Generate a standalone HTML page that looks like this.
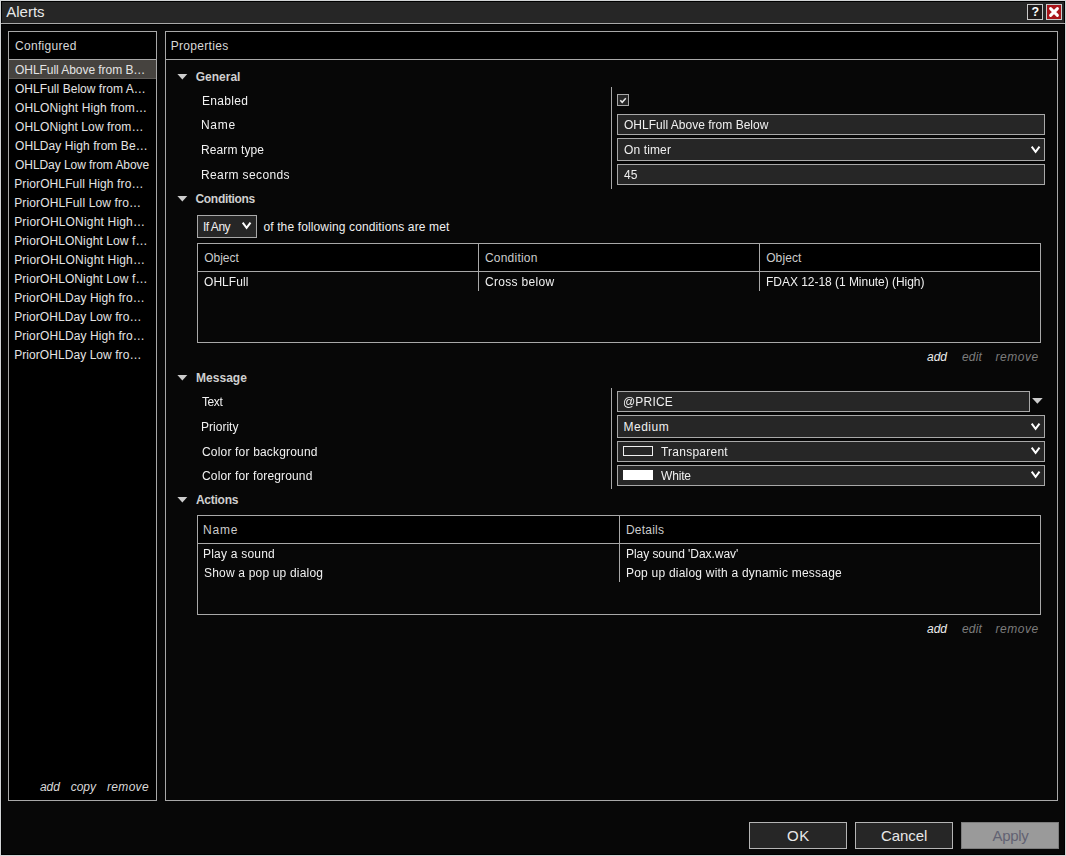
<!DOCTYPE html>
<html><head><meta charset="utf-8">
<style>
*{margin:0;padding:0;box-sizing:border-box}
html,body{width:1066px;height:856px;overflow:hidden;background:#070707}
body{position:relative;font-family:"Liberation Sans",sans-serif;font-size:12px;color:#f0f0f0}
.a{position:absolute}
.t{position:absolute;white-space:nowrap;line-height:12px;font-size:12px}
.b{font-weight:bold}
.it{font-style:italic}
.box{position:absolute;border:1px solid #a8a8a8}
.inp{position:absolute;border:1px solid #a8a8a8;background:#262626}
.hl{position:absolute;height:1px;background:#a8a8a8}
.vl{position:absolute;width:1px;background:#a8a8a8}
.tri{position:absolute;width:0;height:0;border-left:5px solid transparent;border-right:5px solid transparent;border-top:5px solid #b4b4b4}
.btn{position:absolute;border:1px solid #b4b4b4;background:#262626;height:27px;width:98px}
.li{color:#e4e4e4}
.lb{color:#f2f2f2}
.sh{color:#cfcfcf}
.hd{color:#cccccc}
.bt{font-size:15px;line-height:15px;color:#e8e8e8}
.g{will-change:transform}
</style></head><body>

<div class="a" style="left:0;top:0;width:1066px;height:856px;border:1px solid #d2d4d6"></div>
<div class="a" style="left:1px;top:1px;width:1064px;height:854px;border:1px solid #000"></div>
<div class="a" style="left:2px;top:2px;width:1062px;height:21px;background:#262626"></div>
<div class="a" style="left:1px;top:23px;width:1064px;height:1px;background:#a9a9a9"></div>
<div class="a" style="left:1px;top:24px;width:1064px;height:1px;background:#000"></div>
<div class="a" style="left:1027px;top:4px;width:16px;height:16px;border:1px solid #c8c8c8;background:#1e1a1a"></div>
<div class="t b" style="left:1031.6px;top:5.5px;font-size:12.5px;line-height:13px;color:#fff">?</div>
<div class="a" style="left:1046px;top:4px;width:16px;height:16px;border:1px solid #c8cccc;background:#a8151a"></div>
<svg class="a" style="left:1046px;top:4px" width="16" height="16"><path d="M4.6 4.6L11.4 11.4M11.4 4.6L4.6 11.4" stroke="#fff" stroke-width="3" stroke-linecap="round"/></svg>

<div class="box" style="left:8px;top:31px;width:149px;height:770px;background:#000"></div>
<div class="hl" style="left:9px;top:59px;width:147px"></div>
<div class="a" style="left:9px;top:60px;width:147px;height:18px;background:#46433f"></div>
<div class="a" style="left:9px;top:78px;width:147px;height:1px;background:#5e5b57"></div>

<div class="box" style="left:165px;top:31px;width:893px;height:770px;background:#070707"></div>
<div class="a" style="left:166px;top:32px;width:891px;height:27px;background:#000"></div>
<div class="hl" style="left:166px;top:59px;width:891px"></div>

<svg class="a" style="left:177px;top:74px" width="12" height="8"><path d="M0.4 0L10.3 0L5.35 5.6Z" fill="#cccccc"/></svg>
<div class="vl" style="left:611px;top:87px;height:102px"></div>
<div class="inp" style="left:617px;top:94px;width:12px;height:12px"></div>
<svg class="a" style="left:617px;top:94px" width="12" height="12"><path d="M3.3 6.2L5.2 8.3L8.8 4.3" fill="none" stroke="#e8e8e8" stroke-width="1.5"/></svg>
<div class="inp" style="left:617px;top:114px;width:428px;height:21px"></div>
<div class="inp" style="left:617px;top:138px;width:428px;height:23px"></div>
<svg class="a" style="left:1030px;top:146px" width="12" height="9"><path d="M1.7 0.7L5.6 5.9L9.5 0.7" fill="none" stroke="#fff" stroke-width="2"/></svg>
<div class="inp" style="left:617px;top:164px;width:428px;height:21px"></div>

<svg class="a" style="left:177px;top:196px" width="12" height="8"><path d="M0.4 0L10.3 0L5.35 5.6Z" fill="#cccccc"/></svg>
<div class="inp" style="left:197px;top:215px;width:60px;height:23px"></div>
<svg class="a" style="left:241px;top:222px" width="12" height="9"><path d="M1.7 0.7L5.6 5.9L9.5 0.7" fill="none" stroke="#fff" stroke-width="2"/></svg>
<div class="box" style="left:197px;top:243px;width:844px;height:100px;background:#070707"></div>
<div class="a" style="left:198px;top:244px;width:842px;height:27px;background:#000"></div>
<div class="hl" style="left:198px;top:271px;width:842px"></div>
<div class="vl" style="left:478px;top:244px;height:47px"></div>
<div class="vl" style="left:759px;top:244px;height:47px"></div>

<svg class="a" style="left:177px;top:375px" width="12" height="8"><path d="M0.4 0L10.3 0L5.35 5.6Z" fill="#cccccc"/></svg>
<div class="vl" style="left:611px;top:388px;height:101px"></div>
<div class="inp" style="left:617px;top:391px;width:413px;height:21px"></div>
<svg class="a" style="left:1032px;top:398px" width="12" height="7"><path d="M0.1 0L10.7 0L5.4 5.7Z" fill="#cccccc"/></svg>
<div class="inp" style="left:617px;top:415px;width:428px;height:23px"></div>
<svg class="a" style="left:1030px;top:423px" width="12" height="9"><path d="M1.7 0.7L5.6 5.9L9.5 0.7" fill="none" stroke="#fff" stroke-width="2"/></svg>
<div class="inp" style="left:617px;top:441px;width:428px;height:21px"></div>
<div class="a" style="left:623px;top:446px;width:30px;height:10px;border:1px solid #f0f0f0"></div>
<svg class="a" style="left:1030px;top:447px" width="12" height="9"><path d="M1.7 0.7L5.6 5.9L9.5 0.7" fill="none" stroke="#fff" stroke-width="2"/></svg>
<div class="inp" style="left:617px;top:465px;width:428px;height:21px"></div>
<div class="a" style="left:623px;top:470px;width:30px;height:10px;background:#fff"></div>
<svg class="a" style="left:1030px;top:471px" width="12" height="9"><path d="M1.7 0.7L5.6 5.9L9.5 0.7" fill="none" stroke="#fff" stroke-width="2"/></svg>

<svg class="a" style="left:177px;top:497px" width="12" height="8"><path d="M0.4 0L10.3 0L5.35 5.6Z" fill="#cccccc"/></svg>
<div class="box" style="left:197px;top:515px;width:844px;height:100px;background:#070707"></div>
<div class="a" style="left:198px;top:516px;width:842px;height:27px;background:#000"></div>
<div class="hl" style="left:198px;top:543px;width:842px"></div>
<div class="vl" style="left:619px;top:516px;height:66px"></div>

<div class="btn" style="left:749px;top:822px"></div>
<div class="btn" style="left:855px;top:822px"></div>
<div class="btn" style="left:961px;top:822px;background:#9a9a9a;border-color:#7c7c7c"></div>

<div id="t0" class="t bt" style="left:6.24px;top:4px">Alerts</div>
<div id="t1" class="t hd" style="left:15px;top:40px;letter-spacing:0.289px;color:#d8d8d8">Configured</div>
<div id="t2" class="t li" style="left:15px;top:64px;letter-spacing:-0.052px">OHLFull Above from B…</div>
<div id="t3" class="t li" style="left:15px;top:83px;letter-spacing:0.036px">OHLFull Below from A…</div>
<div id="t4" class="t li" style="left:15px;top:102px;letter-spacing:0.135px">OHLONight High from…</div>
<div id="t5" class="t li" style="left:15px;top:121px;letter-spacing:0.098px">OHLONight Low from…</div>
<div id="t6" class="t li" style="left:15px;top:140px;letter-spacing:0.067px">OHLDay High from Be…</div>
<div id="t7" class="t li" style="left:15px;top:159px;letter-spacing:-0.06px">OHLDay Low from Above</div>
<div id="t8" class="t li" style="left:14.2px;top:178px;letter-spacing:0.121px">PriorOHLFull High fro…</div>
<div id="t9" class="t li" style="left:14.2px;top:197px;letter-spacing:0.14px">PriorOHLFull Low fro…</div>
<div id="t10" class="t li" style="left:14.2px;top:216px;letter-spacing:0.177px">PriorOHLONight High…</div>
<div id="t11" class="t li" style="left:14.2px;top:235px;letter-spacing:0.092px">PriorOHLONight Low f…</div>
<div id="t12" class="t li" style="left:14.2px;top:254px;letter-spacing:0.177px">PriorOHLONight High…</div>
<div id="t13" class="t li" style="left:14.2px;top:273px;letter-spacing:0.092px">PriorOHLONight Low f…</div>
<div id="t14" class="t li" style="left:14.2px;top:292px;letter-spacing:0.088px">PriorOHLDay High fro…</div>
<div id="t15" class="t li" style="left:14.2px;top:311px;letter-spacing:0.063px">PriorOHLDay Low fro…</div>
<div id="t16" class="t li" style="left:14.2px;top:330px;letter-spacing:0.088px">PriorOHLDay High fro…</div>
<div id="t17" class="t li" style="left:14.2px;top:349px;letter-spacing:0.063px">PriorOHLDay Low fro…</div>
<div id="t18" class="t it" style="left:39.92px;top:781px;letter-spacing:0.04px;color:#d8d8d8">add</div>
<div id="t19" class="t it" style="left:70.76px;top:781px;letter-spacing:-0.027px;color:#d8d8d8">copy</div>
<div id="t20" class="t it" style="left:107px;top:781px;letter-spacing:0.32px;color:#d8d8d8">remove</div>
<div id="t21" class="t hd" style="left:170.72px;top:40px;letter-spacing:0.31px;color:#d8d8d8">Properties</div>
<div id="t22" class="t b sh" style="left:195.76px;top:71px">General</div>
<div id="t23" class="t lb g" style="left:201.68px;top:95px;letter-spacing:0.333px">Enabled</div>
<div id="t24" class="t lb g" style="left:201.2px;top:119px;letter-spacing:0.693px">Name</div>
<div id="t25" class="t lb g" style="left:201.2px;top:144px;letter-spacing:0.107px">Rearm type</div>
<div id="t26" class="t lb g" style="left:201.2px;top:169px;letter-spacing:0.38px">Rearm seconds</div>
<div id="t27" class="t g" style="left:624px;top:119px;letter-spacing:0.014px">OHLFull Above from Below</div>
<div id="t28" class="t g" style="left:624px;top:144px;letter-spacing:0.126px">On timer</div>
<div id="t29" class="t g" style="left:624.48px;top:169px;letter-spacing:0.08px">45</div>
<div id="t30" class="t b sh" style="left:195.52px;top:193px;letter-spacing:-0.32px">Conditions</div>
<div id="t31" class="t " style="left:202.96px;top:221px;letter-spacing:-0.48px">If Any</div>
<div id="t32" class="t " style="left:263.4px;top:221px;letter-spacing:0.132px">of the following conditions are met</div>
<div id="t33" class="t hd" style="left:204.16px;top:252px">Object</div>
<div id="t34" class="t hd" style="left:484.92px;top:252px;letter-spacing:0.23px">Condition</div>
<div id="t35" class="t hd" style="left:766.16px;top:252px;letter-spacing:0.112px">Object</div>
<div id="t36" class="t g" style="left:204.16px;top:276px;letter-spacing:0.053px">OHLFull</div>
<div id="t37" class="t g" style="left:485.16px;top:276px;letter-spacing:0.304px">Cross below</div>
<div id="t38" class="t g" style="left:766.16px;top:276px;letter-spacing:-0.033px">FDAX 12-18 (1 Minute) (High)</div>
<div id="t39" class="t it" style="left:927px;top:351px;color:#ececec">add</div>
<div id="t40" class="t it" style="left:961.92px;top:351px;letter-spacing:0.186px;color:#7c7c7c">edit</div>
<div id="t41" class="t it" style="left:995.52px;top:351px;letter-spacing:0.528px;color:#7c7c7c">remove</div>
<div id="t42" class="t b sh" style="left:195.92px;top:372px;letter-spacing:0.053px">Message</div>
<div id="t43" class="t lb g" style="left:202px;top:396px;letter-spacing:-0.426px">Text</div>
<div id="t44" class="t lb g" style="left:201.2px;top:421px;letter-spacing:0.012px">Priority</div>
<div id="t45" class="t lb g" style="left:202px;top:446px;letter-spacing:0.181px">Color for background</div>
<div id="t46" class="t lb g" style="left:202px;top:470px;letter-spacing:0.156px">Color for foreground</div>
<div id="t47" class="t g" style="left:623.44px;top:396px;letter-spacing:0.176px">@PRICE</div>
<div id="t48" class="t " style="left:623.44px;top:421px;letter-spacing:0.528px">Medium</div>
<div id="t49" class="t g" style="left:661.24px;top:446px;letter-spacing:0.24px">Transparent</div>
<div id="t50" class="t g" style="left:661.24px;top:470px;letter-spacing:-0.16px">White</div>
<div id="t51" class="t b sh" style="left:195.92px;top:494px;letter-spacing:-0.24px">Actions</div>
<div id="t52" class="t hd" style="left:202.96px;top:524px;letter-spacing:0.854px">Name</div>
<div id="t53" class="t hd" style="left:625.92px;top:524px;letter-spacing:0.24px">Details</div>
<div id="t54" class="t g" style="left:202.96px;top:548px;letter-spacing:0.218px">Play a sound</div>
<div id="t55" class="t g" style="left:203.76px;top:567px;letter-spacing:0.186px">Show a pop up dialog</div>
<div id="t56" class="t g" style="left:625.92px;top:548px;letter-spacing:-0.054px">Play sound 'Dax.wav'</div>
<div id="t57" class="t g" style="left:625.92px;top:567px;letter-spacing:0.217px">Pop up dialog with a dynamic message</div>
<div id="t58" class="t it" style="left:927px;top:623px;color:#ececec">add</div>
<div id="t59" class="t it" style="left:961.92px;top:623px;letter-spacing:0.186px;color:#7c7c7c">edit</div>
<div id="t60" class="t it" style="left:995.52px;top:623px;letter-spacing:0.528px;color:#7c7c7c">remove</div>
<div id="t61" class="t bt" style="left:787px;top:828px;letter-spacing:0.54px">OK</div>
<div id="t62" class="t bt" style="left:880.92px;top:828px;letter-spacing:-0.064px">Cancel</div>
<div id="t63" class="t bt" style="left:992.5px;top:828px;color:#626272;letter-spacing:-0.3px">Apply</div>
</body></html>
